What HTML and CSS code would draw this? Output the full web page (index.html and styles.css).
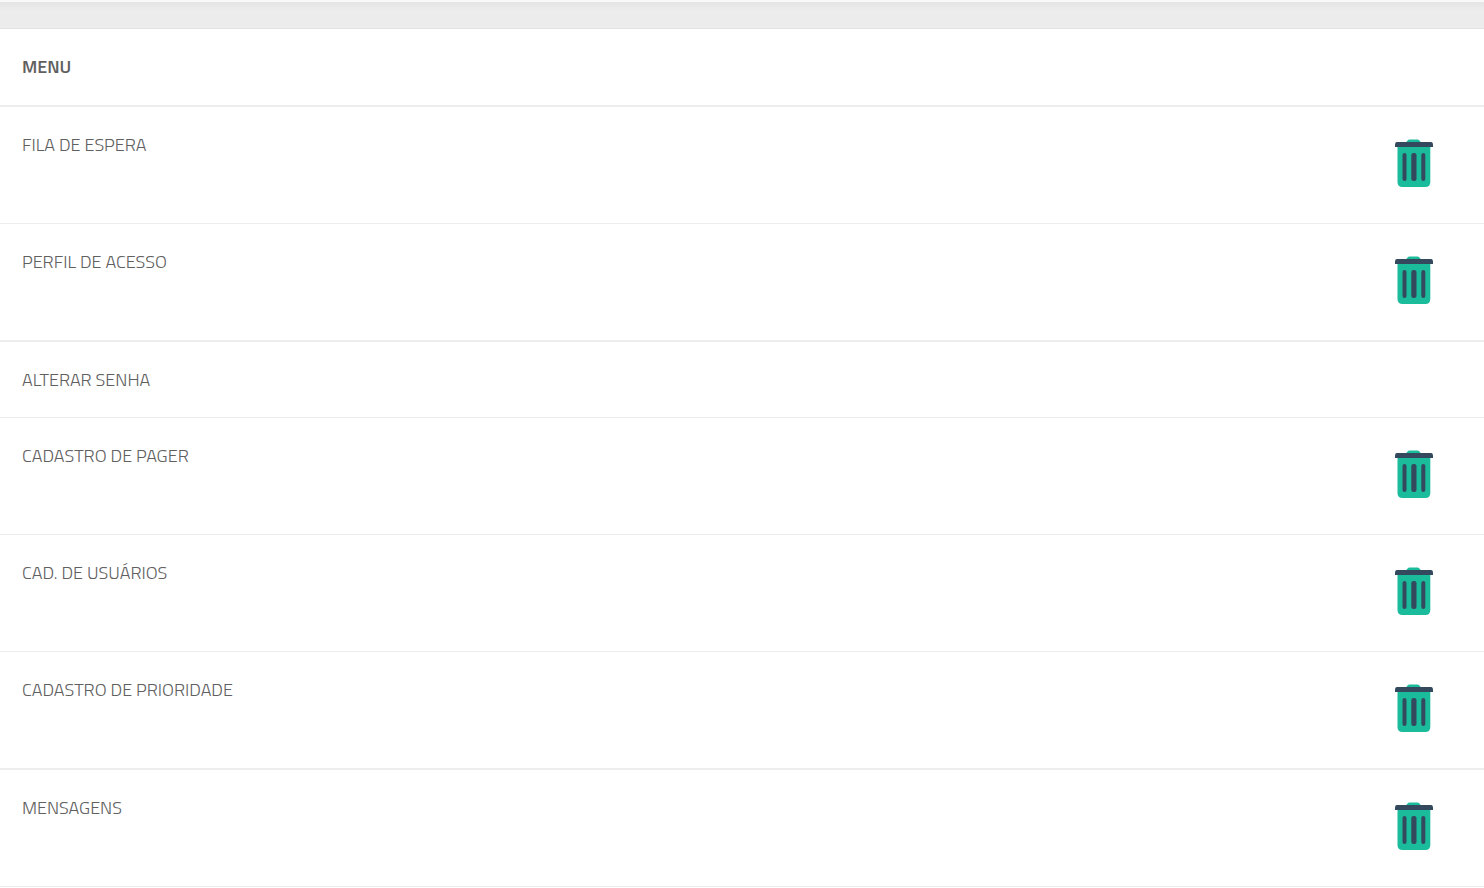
FILE: index.html
```html
<!DOCTYPE html>
<html lang="pt-br">
<head>
    <meta charset="UTF-8">
    <meta name="viewport" content="width=device-width, initial-scale=1">
    <title>Menu</title>
    <link rel="stylesheet" href="styles.css">
</head>
<body>
    <svg class="sprite" aria-hidden="true">
        <symbol id="lixeira" viewBox="0 0 38 48">
            <path fill="#1abc9c" d="M11 3.5 L13 1 Q13.500 .5 14.500 .5 H22.500 Q23.500 .5 24 1 L26 3.500 Z"/>
            <path fill="#1abc9c" d="M2.500 7 H35.300 V43 Q35.300 48 30.300 48 H7.500 Q2.500 48 2.500 43 Z"/>
            <path fill="#34495e" d="M2 3 H36 Q38 3 38 6 V8 H0 V6 Q0 3 2 3 Z"/>
            <rect fill="#34495e" x="7.500" y="14" width="4" height="28" rx="2"/>
            <rect fill="#34495e" x="16.300" y="14" width="5.200" height="28" rx="2.200"/>
            <rect fill="#34495e" x="26.300" y="14" width="4" height="28" rx="2"/>
        </symbol>
    </svg>

    <header class="topo"></header>

    <table class="tabela">
        <thead>
            <tr>
                <th scope="col">MENU</th>
                <td></td>
            </tr>
        </thead>
        <tbody>
            <tr>
                <td>FILA DE ESPERA</td>
                <td class="acao"><button type="button" aria-label="Excluir Fila de Espera"><svg><use href="#lixeira"/></svg></button></td>
            </tr>
            <tr class="grupo">
                <td>PERFIL DE ACESSO</td>
                <td class="acao"><button type="button" aria-label="Excluir Perfil de Acesso"><svg><use href="#lixeira"/></svg></button></td>
            </tr>
            <tr>
                <td>ALTERAR SENHA</td>
                <td class="acao"></td>
            </tr>
            <tr>
                <td>CADASTRO DE PAGER</td>
                <td class="acao"><button type="button" aria-label="Excluir Cadastro de Pager"><svg><use href="#lixeira"/></svg></button></td>
            </tr>
            <tr>
                <td>CAD. DE USUÁRIOS</td>
                <td class="acao"><button type="button" aria-label="Excluir Cad. de Usuários"><svg><use href="#lixeira"/></svg></button></td>
            </tr>
            <tr class="grupo">
                <td>CADASTRO DE PRIORIDADE</td>
                <td class="acao"><button type="button" aria-label="Excluir Cadastro de Prioridade"><svg><use href="#lixeira"/></svg></button></td>
            </tr>
            <tr>
                <td>MENSAGENS</td>
                <td class="acao"><button type="button" aria-label="Excluir Mensagens"><svg><use href="#lixeira"/></svg></button></td>
            </tr>
        </tbody>
    </table>
</body>
</html>
```
FILE: styles.css
```css
body {
    margin: 0;
    background: #fff;
    color: #606060;
    font-family: "Titillium Web", Roboto, sans-serif;
    font-size: 18px;
    font-weight: 300;
    line-height: 24px;
}

.sprite {
    display: none;
}

.topo {
    height: 26px;
    border-top: 2px solid #f8f8f8;
    background: linear-gradient(#e4e4e4, #ececec 8px);
}

.tabela {
    width: 100%;
    border-spacing: 0;
    border-top: 1px solid #e2e2e2;
    background: #fff;
}

.tabela th,
.tabela td {
    padding: 26px 22px 25px;
    border-bottom: 1px solid #ededed;
    text-align: left;
    vertical-align: top;
}

.tabela thead th,
.tabela thead td {
    padding-bottom: 26px;
    border-bottom-width: 2px;
}

.tabela .grupo td {
    border-bottom-width: 2px;
}

.tabela th {
    font-weight: 600;
}

.tabela .acao {
    width: 38px;
    padding-right: 51px;
}

.acao button {
    display: block;
    padding: 6px 0 11px;
    border: 0;
    background: none;
    cursor: pointer;
}

.acao svg {
    display: block;
    width: 38px;
    height: 48px;
}
```
